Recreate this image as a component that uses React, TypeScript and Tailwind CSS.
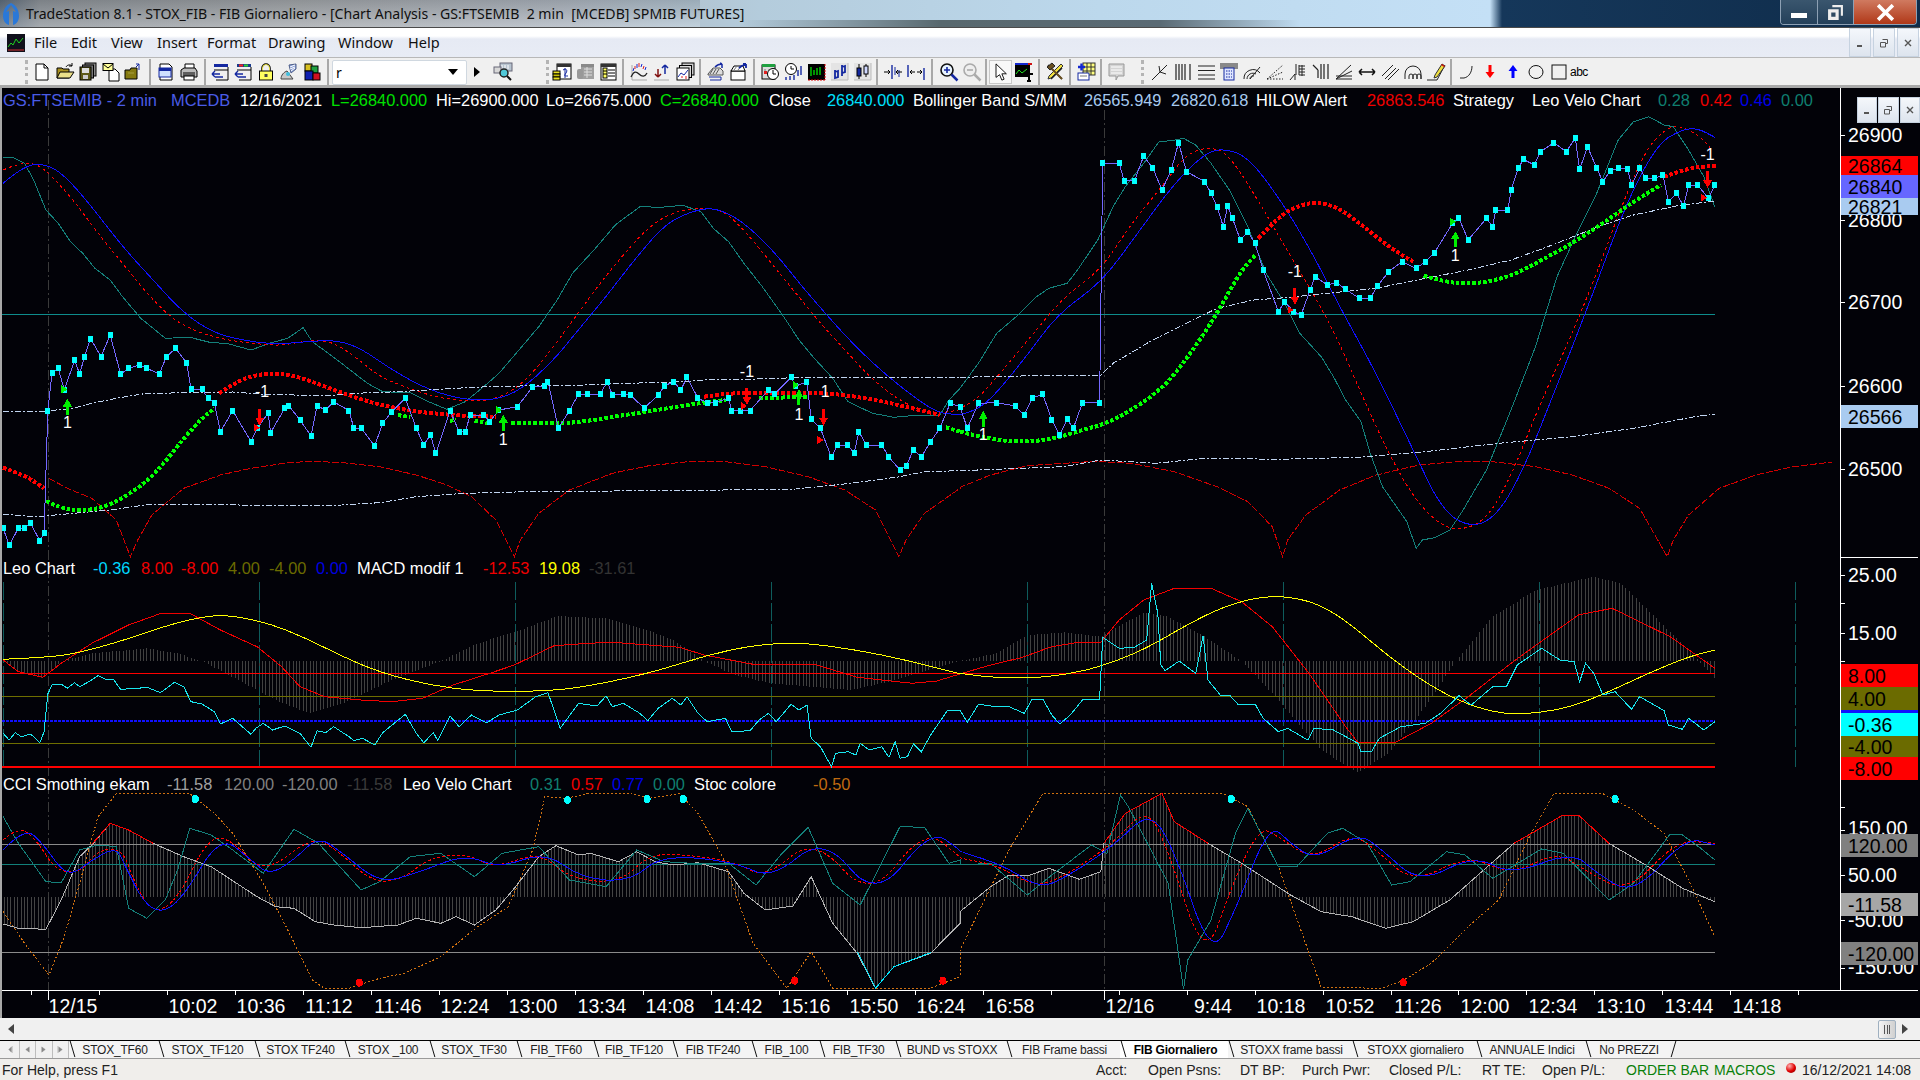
import type { ReactNode } from "react";

// chart data is noted in crop coordinates (x / 1.6333, y / 3), left half and right half
type Pt = [number, number];
const pts = (flat: number[], ox: number, oy: number): Pt[] => {
  const out: Pt[] = [];
  for (let i = 0; i < flat.length; i += 2) out.push([ox + flat[i] / 1.6333, oy + flat[i + 1] / 3]);
  return out;
};
const both = (l: number[], r: number[], oy: number) => [...pts(l, 0, oy), ...pts(r, 960, oy)];
const str = (p: Pt[]) => p.map(([x, y]) => `${x.toFixed(1)},${y.toFixed(1)}`).join(" ");
// rounded version for the moving averages, which have no corners in the chart
const smooth = (p: Pt[]) => {
  let d = `M${p[0][0].toFixed(1)} ${p[0][1].toFixed(1)}`;
  for (let i = 1; i < p.length - 1; i++) {
    const mx = (p[i][0] + p[i + 1][0]) / 2;
    const my = (p[i][1] + p[i + 1][1]) / 2;
    d += `Q${p[i][0].toFixed(1)} ${p[i][1].toFixed(1)} ${mx.toFixed(1)} ${my.toFixed(1)}`;
  }
  const last = p[p.length - 1];
  return `${d}L${last[0].toFixed(1)} ${last[1].toFixed(1)}`;
};
const TOP = 100;
const MID = 550;

const topTeal = both(
  [5,172,20,172,40,190,55,240,75,330,95,370,115,425,135,460,155,505,180,540,200,590,230,655,270,715,310,712,345,728,370,730,410,750,440,730,470,715,495,683,510,725,540,765,565,800,600,850,625,875,670,878,700,905,730,928,760,905,790,860,815,820,850,745,880,680,910,600,935,520,970,450,1005,375,1045,320,1080,322,1115,316,1145,335,1165,385,1190,425,1215,490,1245,560,1280,650,1305,720,1330,775,1360,835,1385,905,1425,940,1460,952,1500,945,1535,945,1550,900,1568,865],
  [0,865,30,790,60,700,95,645,125,590,145,565,175,550,190,515,225,420,250,320,270,260,300,190,325,125,345,122,365,115,385,135,410,190,440,270,470,380,500,520,530,610,555,700,590,770,610,830,630,900,655,965,670,1060,690,1160,730,1265,745,1345,755,1320,775,1313,800,1290,820,1235,860,1110,900,930,940,740,975,530,1005,410,1040,280,1075,120,1100,65,1125,50,1150,75,1165,80,1190,150,1215,230,1233,322],
  TOP,
);
const topRed = both(
  [5,210,30,190,60,190,85,230,120,300,160,400,200,490,240,580,280,655,320,695,370,720,420,732,460,737,500,722,540,722,580,770,620,830,660,860,700,885,740,900,790,905,825,885,860,840,900,750,940,650,980,550,1020,460,1060,380,1100,335,1150,322,1185,335,1220,400,1260,490,1300,580,1340,670,1380,750,1420,830,1460,890,1500,930,1530,940,1568,930],
  [0,925,30,895,70,810,120,700,170,590,230,510,280,370,330,260,370,160,410,140,440,165,490,310,540,470,580,590,620,730,660,900,700,1060,740,1190,780,1270,815,1293,860,1260,900,1130,950,900,1000,700,1040,520,1080,320,1120,150,1150,90,1175,75,1210,110,1228,150],
  TOP,
);
const topBlue = both(
  [5,250,40,195,75,192,105,225,150,320,200,440,250,540,300,640,350,700,400,722,450,733,500,725,550,720,590,745,640,810,700,870,760,900,810,900,850,870,900,790,940,700,990,590,1040,470,1090,365,1140,328,1170,325,1210,360,1260,445,1310,560,1360,665,1400,745,1450,830,1510,915,1540,942,1568,942],
  [0,945,40,920,100,790,160,640,230,550,290,400,350,250,400,160,430,145,470,170,520,290,570,440,620,620,680,820,740,1050,790,1240,840,1285,880,1240,920,1110,970,880,1030,600,1090,300,1140,130,1180,88,1205,85,1233,112],
  TOP,
);
const arcs = both(
  [80,1135,110,1165,150,1195,190,1260,213,1370,225,1320,248,1245,300,1165,360,1125,410,1105,470,1088,510,1084,560,1088,620,1100,680,1125,730,1155,770,1190,810,1260,840,1370,850,1320,880,1240,930,1170,1000,1120,1060,1097,1130,1084,1180,1084,1250,1100,1320,1130,1380,1170,1430,1230,1468,1370,1480,1320,1510,1240,1568,1165],
  [0,1162,50,1125,110,1097,220,1084,280,1090,350,1115,420,1160,470,1205,510,1280,527,1370,535,1320,565,1245,620,1170,680,1125,750,1095,810,1085,870,1085,940,1100,1000,1125,1060,1165,1110,1225,1155,1370,1165,1320,1190,1245,1240,1165,1300,1125,1360,1100,1425,1086],
  TOP,
);
const bandUp = both(
  [5,935,75,933,120,925,150,910,190,895,240,880,320,878,380,876,430,883,480,885,530,888,580,880,650,875,720,868,770,862,850,858,930,857,990,852,1060,848,1120,845,1150,840,1220,838,1300,833,1430,832,1568,833],
  [0,832,100,828,230,826,250,790,310,725,370,670,420,625,480,600,540,592,600,580,680,565,760,535,830,510,900,480,960,440,1050,375,1100,345,1170,318,1233,303],
  TOP,
);
const bandLow = both(
  [5,1243,60,1250,120,1240,180,1230,240,1214,340,1213,440,1217,550,1216,620,1208,680,1190,760,1180,860,1175,960,1175,1060,1170,1180,1170,1300,1167,1390,1150,1470,1130,1510,1115,1568,1112],
  [0,1112,100,1105,170,1100,230,1080,320,1090,400,1075,520,1078,650,1072,760,1055,880,1030,1000,1010,1100,985,1200,950,1233,943],
  TOP,
);
const GREEN = "#00ff00";
const RED = "#ff0000";
const hilow: [Pt[], string][] = [
  [pts([5,1103,40,1125,72,1165], 0, TOP), RED],
  [pts([75,1203,100,1225,130,1232,165,1225,200,1195,240,1145,270,1085,300,1015,330,955,350,925], 0, TOP), GREEN],
  [pts([358,880,390,840,430,820,470,822,510,845,560,880,610,910,650,925,680,935,720,942,760,948,810,950], 0, TOP), RED],
  [pts([650,945,670,952], 0, TOP), GREEN],
  [pts([735,962,745,960], 0, TOP), GREEN],
  [pts([775,962,800,970], 0, TOP), GREEN],
  [pts([835,968,910,972,960,963,1020,945,1080,928,1140,910,1185,900], 0, TOP), GREEN],
  [pts([1240,895,1270,893,1320,890], 0, TOP), GREEN],
  [pts([1150,890,1170,885,1195,880,1240,880,1290,878,1330,878,1380,885,1430,900,1480,920,1535,945], 0, TOP), RED],
  [pts([1545,982,1568,995], 0, TOP), GREEN],
  [pts([0,995,50,1018,100,1026,150,1018,200,990,240,970,280,930,320,880,350,825,380,750,410,670,435,590,460,510,483,465], 960, TOP), GREEN],
  [pts([487,415,520,350,555,315,585,306,620,325,660,380,700,440,740,485], 960, TOP), RED],
  [pts([757,527,790,545,830,552,870,543,910,520,950,480,1000,430,1050,370,1100,305,1145,255], 960, TOP), GREEN],
  [pts([1150,230,1190,203,1235,197], 960, TOP), RED],
];
const price = both(
  [5,1285,15,1335,30,1285,40,1285,50,1270,65,1322,72,1300,78,933,85,820,95,805,105,870,122,780,130,822,138,770,148,716,165,770,180,705,197,822,210,805,228,795,240,805,260,822,272,770,287,745,305,790,312,868,330,868,340,895,350,908,360,995,380,932,410,1025,420,985,438,940,442,998,465,925,472,918,490,960,508,1008,518,918,532,930,545,905,570,932,578,985,590,985,612,1038,625,970,640,935,662,895,680,985,692,1035,703,1005,712,1060,735,932,750,995,760,995,768,945,790,945,800,965,815,930,845,920,870,860,890,858,895,845,912,985,930,932,945,882,960,882,980,882,992,845,1000,885,1018,882,1030,885,1052,925,1075,885,1085,858,1100,845,1112,870,1122,832,1140,895,1155,908,1168,908,1190,895,1195,932,1210,932,1225,932,1255,870,1265,882,1292,832,1300,858,1318,845,1325,958,1340,985,1358,1072,1368,1035,1385,1035,1395,1060,1403,995,1415,1035,1440,1035,1452,1072,1470,1110,1480,1098,1492,1050,1505,1070,1520,1025,1535,985,1552,910,1568,920],
  [0,920,12,985,30,910,60,908,90,918,105,945,118,895,135,882,150,960,163,1005,175,958,185,985,200,908,228,908,233,190,260,190,268,242,285,242,300,168,315,205,330,270,345,210,357,128,370,215,400,245,410,280,420,320,430,380,437,318,445,355,458,420,470,395,482,430,495,510,520,635,530,605,545,635,557,645,572,570,580,530,600,555,615,548,630,568,652,595,670,595,682,558,700,515,722,485,745,505,760,485,775,458,805,368,815,355,830,420,860,355,870,380,875,330,895,330,900,270,912,205,920,178,938,195,948,155,970,128,990,155,1005,115,1012,208,1025,140,1040,205,1050,245,1062,212,1075,205,1090,208,1097,255,1110,205,1120,235,1135,235,1148,225,1157,305,1170,280,1182,318,1190,255,1205,255,1222,295,1233,255],
  TOP,
);

const macdRed = both(
  [5,330,30,365,70,382,100,340,150,280,210,225,260,192,310,190,360,240,420,290,460,350,490,410,530,440,590,450,640,455,690,445,740,405,800,370,840,345,905,287,960,280,1000,277,1110,292,1150,315,1230,343,1330,343,1400,382,1490,400,1530,393,1568,372],
  [0,372,50,345,100,323,150,290,190,278,230,277,260,210,300,150,350,115,410,115,460,155,510,230,570,370,630,530,650,578,710,578,770,520,830,440,900,340,960,260,1010,195,1065,175,1110,215,1160,260,1233,355],
  MID,
);
const macdYellow = both(
  [5,328,80,322,130,308,200,272,280,222,340,197,380,197,440,220,500,265,560,320,620,367,700,405,780,424,900,424,980,402,1070,365,1150,318,1230,285,1310,277,1400,300,1480,330,1568,372],
  [0,370,50,382,110,385,170,375,230,350,300,300,370,225,430,170,490,140,540,140,590,165,640,225,700,320,770,410,830,465,890,493,940,490,1000,470,1060,425,1130,365,1190,320,1233,300],
  MID,
);
const leoCyan = both(
  [5,550,15,570,25,548,35,560,50,552,65,578,72,545,78,432,85,405,100,402,110,415,122,398,130,410,145,395,160,377,175,390,185,388,197,418,225,415,240,412,262,428,285,397,300,410,312,455,330,462,350,485,360,522,380,505,410,553,418,535,430,520,445,540,465,528,490,550,508,592,518,542,532,548,545,530,570,560,578,572,592,565,612,585,625,548,662,493,680,550,692,578,708,548,715,572,735,498,750,530,770,495,795,518,815,495,845,480,875,440,895,428,915,535,945,460,975,468,990,438,1000,470,1018,460,1045,490,1058,512,1075,475,1098,445,1112,465,1122,440,1140,490,1155,515,1185,505,1195,545,1225,542,1240,510,1255,490,1268,515,1292,463,1305,480,1318,465,1325,565,1340,590,1358,650,1365,610,1385,605,1398,615,1405,580,1420,600,1440,590,1452,622,1462,575,1470,625,1482,620,1492,582,1505,605,1520,555,1548,480,1568,480],
  [0,480,12,517,30,463,60,470,80,470,105,490,118,447,135,447,150,495,163,522,180,495,200,450,228,448,233,262,260,295,285,292,305,270,313,100,323,190,328,345,335,362,358,333,385,370,397,258,405,390,425,435,440,435,455,465,482,462,495,505,520,545,535,535,568,570,578,535,610,540,650,580,655,605,672,605,685,565,720,530,760,520,785,490,815,437,835,465,870,410,893,408,910,345,950,295,980,330,1003,335,1012,395,1022,340,1035,370,1050,435,1070,425,1097,478,1110,440,1150,482,1157,525,1180,538,1190,505,1215,540,1233,515],
  MID,
);
const macdHist = both(
  [5,333,30,365,70,385,100,333,150,310,240,295,290,310,330,333,400,400,450,450,505,490,560,460,640,390,720,333,780,280,850,240,910,198,990,205,1050,235,1100,270,1150,333,1200,375,1260,400,1390,420,1440,400,1500,370,1568,333],
  [0,333,60,310,110,255,170,247,230,260,300,187,340,200,400,260,460,333,520,450,590,600,650,668,700,610,760,470,810,333,870,200,940,120,1035,80,1080,100,1140,210,1190,300,1233,385],
  MID,
);

const cciLine = both(
  [5,1122,30,1135,75,1138,100,1050,130,920,150,885,180,820,210,840,250,880,300,920,345,950,420,1040,450,1070,480,1075,515,1115,545,1125,590,1133,650,1125,680,1105,720,1120,745,1100,775,1125,810,1080,840,1015,880,920,908,887,945,915,965,910,1010,935,1040,905,1070,935,1100,945,1140,938,1190,965,1215,1030,1250,1080,1295,1068,1325,980,1360,1120,1400,1210,1430,1315,1460,1250,1520,1210,1568,1120],
  [0,1085,50,1010,80,975,110,978,145,955,195,988,230,965,235,880,270,790,330,730,350,815,405,880,460,940,540,1035,590,1085,640,1100,695,1135,740,1115,800,1050,840,985,905,880,985,795,1010,795,1060,880,1120,945,1180,1015,1233,1055],
  MID,
);
const cciTeal = both(
  [5,800,30,880,75,995,100,998,130,900,160,885,190,890,210,1075,240,1105,270,1050,290,960,310,835,345,855,380,900,430,970,480,838,520,880,590,1020,620,995,670,920,720,910,775,980,820,910,880,890,930,990,990,1010,1040,900,1085,935,1130,940,1190,940,1235,1005,1275,915,1320,832,1360,1000,1405,1065,1470,830,1510,832,1550,940,1568,930],
  [0,945,50,940,110,1035,150,975,215,885,240,910,262,735,275,770,340,1000,365,1318,372,1230,410,1110,450,850,470,775,520,950,550,950,600,850,625,835,665,880,705,1005,735,995,795,905,825,915,870,985,950,897,985,910,1060,1050,1100,1000,1160,852,1180,855,1210,895,1233,930],
  MID,
);
const cciRed = both(
  [5,870,30,828,60,870,90,960,130,970,160,900,200,895,220,1000,250,1092,290,1050,340,860,380,870,430,975,510,858,550,900,610,1000,660,985,700,925,760,910,810,955,880,905,930,985,1010,1000,1060,915,1110,912,1200,935,1250,985,1330,860,1420,1050,1510,835,1568,920],
  [0,925,60,945,120,1010,170,980,250,880,305,770,340,900,400,1240,445,1000,490,830,520,860,575,930,640,850,680,900,740,1000,830,915,900,975,975,905,1020,960,1090,1030,1170,870,1233,880],
  MID,
);
const cciBlue = both(
  [5,900,40,832,70,880,110,985,150,930,190,890,205,950,235,1060,265,1090,300,1040,360,855,410,930,440,975,480,930,520,858,560,910,620,1000,680,970,760,912,815,955,890,905,950,985,1030,995,1080,915,1200,935,1260,988,1345,857,1430,1050,1520,838,1568,900],
  [0,905,70,945,130,1015,170,985,250,890,310,780,350,900,410,1225,450,1080,505,820,540,880,580,930,650,848,690,900,750,1000,840,915,900,975,1000,905,1040,970,1100,1035,1185,862,1233,885],
  MID,
);
const stocOrange = both(
  [5,1085,40,1180,80,1275,105,1160,130,1000,160,800,190,731,310,731,350,790,380,850,430,1000,470,1140,510,1290,530,1315,570,1315,620,1285,660,1270,720,1220,780,1130,830,1070,870,900,890,740,925,745,960,731,1030,731,1060,745,1110,731,1140,790,1180,920,1230,1180,1285,1315,1325,1205,1360,1315,1520,1315,1568,1280],
  [0,1200,40,1050,80,900,135,731,430,731,470,770,520,950,590,1312,690,1315,725,1290,770,1240,830,1130,880,1050,930,860,970,731,1050,731,1100,780,1150,850,1190,990,1233,1160],
  MID,
);
const cciHot: [Pt[], string][] = [
  [pts([150,883,180,820,210,840,250,880], 0, MID), "#ff0000"],
  [pts([1400,1205,1430,1315,1460,1250,1520,1208], 0, MID), "#00e8ff"],
  [pts([235,880,270,790,330,730,350,815,405,880], 960, MID), "#ff0000"],
  [pts([905,880,985,795,1010,795,1060,880], 960, MID), "#ff0000"],
];

// grey histogram bars are read off the envelope at a fixed step
const at = (line: Pt[], x: number) => {
  for (let i = 1; i < line.length; i++) {
    if (x <= line[i][0]) {
      const [x0, y0] = line[i - 1];
      const [x1, y1] = line[i];
      return y0 + ((y1 - y0) * (x - x0)) / Math.max(x1 - x0, 0.01);
    }
  }
  return line[line.length - 1][1];
};
const bars = (env: Pt[], base: number) => {
  let d = "";
  for (let x = 4; x <= 1715; x += 3.4) d += `M${x.toFixed(1)} ${base}V${at(env, x).toFixed(1)}`;
  return d;
};

const crop = (x: number, ox = 0) => ox + x / 1.6333;
const ups: Pt[] = [[crop(110), 100 + 920 / 3], [crop(822), 100 + 968 / 3], [crop(1305), 100 + 892 / 3], [crop(38, 960), 100 + 957 / 3], [crop(809, 960), 100 + 418 / 3]];
const downs: Pt[] = [[crop(424), 100 + 950 / 3], [crop(1220), 100 + 888 / 3], [crop(1345), 100 + 950 / 3], [crop(547, 960), 100 + 587 / 3], [crop(1221, 960), 100 + 237 / 3]];
const counts: [string, number, number][] = [
  ["1", crop(110), 100 + 985 / 3],
  ["-1", crop(428), 100 + 892 / 3],
  ["1", crop(822), 100 + 1035 / 3],
  ["-1", crop(1220), 100 + 832 / 3],
  ["1", crop(1305), 100 + 960 / 3],
  ["1", crop(1348), 100 + 892 / 3],
  ["1", crop(38, 960), 100 + 1020 / 3],
  ["-1", crop(547, 960), 100 + 532 / 3],
  ["1", crop(809, 960), 100 + 483 / 3],
  ["-1", crop(1221, 960), 100 + 180 / 3],
];
const flagsGreen: Pt[] = [[crop(105), 100 + 868 / 3], [crop(815), 100 + 930 / 3], [crop(1300), 100 + 855 / 3], [crop(805, 960), 100 + 365 / 3]];
const flagsRed: Pt[] = [[crop(420), 100 + 983 / 3], [crop(1215), 100 + 918 / 3], [crop(1340), 100 + 1020 / 3], [crop(540, 960), 100 + 630 / 3], [crop(1215, 960), 100 + 293 / 3]];
const dotsCyan: Pt[] = [[crop(319), 550 + 747 / 3], [crop(927), 550 + 750 / 3], [crop(1057), 550 + 747 / 3], [crop(1116), 550 + 747 / 3], [crop(443, 960), 550 + 747 / 3], [crop(1070, 960), 550 + 747 / 3]];
const dotsRed: Pt[] = [[crop(587), 550 + 1298 / 3], [crop(1298), 550 + 1292 / 3], [crop(1540), 550 + 1292 / 3], [crop(724, 960), 550 + 1297 / 3]];

const timeLabels: [string, number][] = [
  ["12/15", 73], ["10:02", 193], ["10:36", 261], ["11:12", 329], ["11:46", 398], ["12:24", 465], ["13:00", 533], ["13:34", 602],
  ["14:08", 670], ["14:42", 738], ["15:16", 806], ["15:50", 874], ["16:24", 941], ["16:58", 1010], ["12/16", 1130], ["9:44", 1213],
  ["10:18", 1281], ["10:52", 1350], ["11:26", 1418], ["12:00", 1485], ["12:34", 1553], ["13:10", 1621], ["13:44", 1689], ["14:18", 1757],
];
const timeTicks = [
  ...[52,162,273,385,496,607,718,829,940,1051,1162,1273,1384,1495].map((x) => crop(x)),
  ...[38,149,260,371,482,593,704,815,926,1037,1148,1259,1370].map((x) => crop(x, 960)),
];
const macdMarks = [...[5,424,842,1260].map((x) => crop(x)), ...[110,528,946,1364].map((x) => crop(x, 960))];

function PlotArea() {
  return (
    <svg viewBox="2 88 1838 930" className="h-full w-[1838px] shrink-0 font-['Liberation_Sans',sans-serif]" shapeRendering="crispEdges">
      <line x1="48" y1="100" x2="48" y2="990" stroke="#3a3a3a" strokeDasharray="10 3 2 3" />
      <line x1="1104" y1="110" x2="1104" y2="990" stroke="#3a3a3a" strokeDasharray="10 3 2 3" />
      {/* price panel */}
      <line x1="2" y1="314.5" x2="1715" y2="314.5" stroke="#0e8c8c" />
      <polyline points={str(arcs)} fill="none" stroke="#d00000" strokeDasharray="7 2" />
      <polyline points={str(topTeal)} fill="none" stroke="#14807a" />
      <path d={smooth(topRed)} fill="none" stroke="#ff0000" strokeDasharray="3 3" />
      <path d={smooth(topBlue)} fill="none" stroke="#1010ff" />
      <polyline points={str(bandUp)} fill="none" stroke="#c0d4f0" strokeDasharray="6 2 2 2" />
      <polyline points={str(bandLow)} fill="none" stroke="#c0d4f0" strokeDasharray="6 2 2 2" />
      {hilow.map(([p, c], i) => (
        <path key={i} d={smooth(p)} fill="none" stroke={c} strokeWidth="4" strokeDasharray="3.5 2" />
      ))}
      <polyline points={str(price)} fill="none" stroke="#7468ff" />
      {price.map(([x, y], i) => (
        <rect key={i} x={x - 2.5} y={y - 3} width="5" height="6" fill="#00ffff" />
      ))}
      {flagsGreen.map(([x, y], i) => (
        <path key={i} d={`M${x - 3} ${y - 4}l6 4l-6 4z`} fill="#00f000" />
      ))}
      {flagsRed.map(([x, y], i) => (
        <path key={i} d={`M${x - 3} ${y - 4}l6 4l-6 4z`} fill="#ff0000" />
      ))}
      {ups.map(([x, y], i) => (
        <path key={i} d={`M${x} ${y - 8}l4.5 8h-3v8h-3v-8h-3z`} fill="#00f000" />
      ))}
      {downs.map(([x, y], i) => (
        <path key={i} d={`M${x - 1.5} ${y - 8}h3v9h3l-4.5 8l-4.5-8h3z`} fill="#ff0000" />
      ))}
      {counts.map(([t, x, y], i) => (
        <text key={i} x={x} y={y} fill="#fff" fontSize="16" textAnchor="middle">{t}</text>
      ))}

      {/* macd panel */}
      <path d={bars(macdHist, 661)} stroke="#404040" fill="none" />
      {macdMarks.map((x) => (
        <line key={x} x1={x} y1="582" x2={x} y2="767" stroke="#0e5c5c" strokeDasharray="18 3" />
      ))}
      <line x1="2" y1="673.5" x2="1715" y2="673.5" stroke="#ff0000" />
      <line x1="2" y1="696.5" x2="1715" y2="696.5" stroke="#6e6e00" />
      <line x1="2" y1="721" x2="1715" y2="721" stroke="#1010ff" strokeWidth="2" strokeDasharray="3 1" />
      <line x1="2" y1="743.5" x2="1715" y2="743.5" stroke="#6e6e00" />
      <line x1="2" y1="767" x2="1715" y2="767" stroke="#ff0000" strokeWidth="2" />
      <polyline points={str(macdRed)} fill="none" stroke="#f00000" />
      <path d={smooth(macdYellow)} fill="none" stroke="#ffff00" />
      <polyline points={str(leoCyan)} fill="none" stroke="#19e6ee" />

      {/* cci panel */}
      <path d={bars(cciLine, 897)} stroke="#444444" fill="none" />
      <line x1="2" y1="844" x2="1715" y2="844" stroke="#8a8a8a" />
      <line x1="2" y1="864" x2="1715" y2="864" stroke="#12807a" />
      <line x1="2" y1="952" x2="1715" y2="952" stroke="#8a8a8a" />
      <polyline points={str(stocOrange)} fill="none" stroke="#d07010" strokeDasharray="2 2" />
      <polyline points={str(cciLine)} fill="none" stroke="#b4b4b4" />
      {cciHot.map(([p, c], i) => (
        <polyline key={i} points={str(p)} fill="none" stroke={c} />
      ))}
      <polyline points={str(cciTeal)} fill="none" stroke="#14807a" />
      <path d={smooth(cciRed)} fill="none" stroke="#ff0000" strokeDasharray="3 2" />
      <path d={smooth(cciBlue)} fill="none" stroke="#1010ff" />
      {dotsCyan.map(([x, y], i) => (
        <ellipse key={i} cx={x} cy={y} rx="3.5" ry="4" fill="#00ffff" />
      ))}
      {dotsRed.map(([x, y], i) => (
        <ellipse key={i} cx={x} cy={y} rx="3.5" ry="4" fill="#ff0000" />
      ))}

      {/* time axis */}
      <line x1="2" y1="990" x2="1840" y2="990" stroke="#fff" />
      {timeTicks.map((x) => (
        <line key={x} x1={x} y1="990" x2={x} y2="995" stroke="#fff" />
      ))}
      <line x1="48" y1="990" x2="48" y2="1000" stroke="#fff" />
      <line x1="1104" y1="990" x2="1104" y2="1000" stroke="#fff" />
      {timeLabels.map(([t, x]) => (
        <text key={t} x={x} y="1013" fill="#fff" fontSize="19.5" textAnchor="middle">{t}</text>
      ))}
    </svg>
  );
}

const scaleLabels: [string, number][] = [
  ["26900", 135], ["26800", 220], ["26700", 302], ["26600", 386], ["26500", 469],
  ["25.00", 575], ["15.00", 633], ["150.00", 828], ["50.00", 875], ["-50.00", 920], ["-150.00", 967],
];
const scaleTicks = [135, 220, 302, 386, 469, 575, 603, 633, 661, 807, 830, 875, 920, 968];
const scaleBoxes: [string, number, number, string][] = [
  ["26821", 198, 215, "#a9cbf0"],
  ["26864", 156, 175, "#ff0000"],
  ["26840", 175, 198, "#6666ff"],
  ["26566", 405, 428, "#a9cbf0"],
  ["8.00", 664, 687, "#ff0000"],
  ["4.00", 687, 710, "#6b6b00"],
  ["-0.36", 713, 736, "#00ffff"],
  ["-4.00", 736, 757, "#6b6b00"],
  ["-8.00", 757, 780, "#ff0000"],
  ["120.00", 834, 857, "#808080"],
  ["-11.58", 893, 916, "#a6a6a6"],
  ["-120.00", 942, 965, "#808080"],
];

function PriceScale() {
  return (
    <svg viewBox="1840 88 80 930" className="h-full w-[80px] shrink-0 font-['Liberation_Sans',sans-serif]" shapeRendering="crispEdges">
      <line x1="1840.5" y1="88" x2="1840.5" y2="990" stroke="#fff" />
      <line x1="1840" y1="557" x2="1918" y2="557" stroke="#fff" />
      <line x1="1840" y1="990" x2="1918" y2="990" stroke="#fff" />
      {scaleTicks.map((y) => (
        <line key={y} x1="1840" y1={y} x2="1845" y2={y} stroke="#fff" />
      ))}
      {scaleLabels.map(([t, y]) => (
        <text key={t} x="1848" y={y + 7} fill="#fff" fontSize="19.5">{t}</text>
      ))}
      <rect x="1841" y="710" width="77" height="3" fill="#1010ff" />
      {scaleBoxes.map(([t, y0, y1, c]) => (
        <g key={t}>
          <rect x="1841" y={y0} width="77" height={y1 - y0} fill={c} />
          <text x="1848" y={(y0 + y1) / 2 + 7} fill="#000" fontSize="19.5">{t}</text>
        </g>
      ))}
    </svg>
  );
}

const row1: [string, string][] = [
  ["GS:FTSEMIB - 2 min", "w-[168px] text-[#4a5ce6]"],
  ["MCEDB", "w-[69px] text-[#4a5ce6]"],
  ["12/16/2021", "w-[91px] text-white"],
  ["L=26840.000", "w-[105px] text-[#00e000]"],
  ["Hi=26900.000", "w-[110px] text-white"],
  ["Lo=26675.000", "w-[114px] text-white"],
  ["C=26840.000", "w-[109px] text-[#00e000]"],
  ["Close", "w-[58px] text-white"],
  ["26840.000", "w-[86px] text-[#00e0ff]"],
  ["Bollinger Band S/MM", "w-[171px] text-white"],
  ["26565.949", "w-[87px] text-[#a6caf0]"],
  ["26820.618", "w-[85px] text-[#a6caf0]"],
  ["HILOW Alert", "w-[111px] text-white"],
  ["26863.546", "w-[86px] text-[#f00000]"],
  ["Strategy", "w-[79px] text-white"],
  ["Leo Velo Chart", "w-[126px] text-white"],
  ["0.28", "w-[42px] text-[#0f7f70]"],
  ["0.42", "w-[40px] text-[#f00000]"],
  ["0.46", "w-[41px] text-[#0000e8]"],
  ["0.00", "w-[40px] text-[#0f7f70]"],
];
const row2: [string, string][] = [
  ["Leo Chart", "w-[90px] text-white"],
  ["-0.36", "w-[48px] text-[#00d8ff]"],
  ["8.00", "w-[40px] text-[#f00000]"],
  ["-8.00", "w-[47px] text-[#f00000]"],
  ["4.00", "w-[41px] text-[#6b6b00]"],
  ["-4.00", "w-[47px] text-[#6b6b00]"],
  ["0.00", "w-[41px] text-[#0000e0]"],
  ["MACD modif 1", "w-[126px] text-white"],
  ["-12.53", "w-[56px] text-[#f00000]"],
  ["19.08", "w-[50px] text-[#ffff00]"],
  ["-31.61", "w-[60px] text-[#333333]"],
];
const row3: [string, string][] = [
  ["CCI Smothing ekam", "w-[164px] text-white"],
  ["-11.58", "w-[57px] text-[#a0a0a0]"],
  ["120.00", "w-[58px] text-[#808080]"],
  ["-120.00", "w-[65px] text-[#808080]"],
  ["-11.58", "w-[56px] text-[#3a3a3a]"],
  ["Leo Velo Chart", "w-[127px] text-white"],
  ["0.31", "w-[41px] text-[#0f7f70]"],
  ["0.57", "w-[41px] text-[#f00000]"],
  ["0.77", "w-[41px] text-[#0000e8]"],
  ["0.00", "w-[41px] text-[#0f7f70]"],
  ["Stoc colore", "w-[119px] text-white"],
  ["-0.50", "w-[50px] text-[#c06a10]"],
];

function Legend({ items, className }: { items: [string, string][]; className: string }) {
  return (
    <div className={`pointer-events-none absolute left-[1px] flex h-5 items-center text-[16.4px] leading-5 whitespace-nowrap ${className}`}>
      {items.map(([t, c], i) => (
        <span key={i} className={`shrink-0 ${c}`}>{t}</span>
      ))}
    </div>
  );
}

function Ico({ children }: { children: ReactNode }) {
  return (
    <svg viewBox="0 0 20 20" className="size-5" fill="none">
      {children}
    </svg>
  );
}
function Btn({ children }: { children: ReactNode }) {
  return <div className="flex h-[24px] w-[23px] shrink-0 items-center justify-center">{children}</div>;
}
function Sep({ className }: { className: string }) {
  return <div className={`flex h-[26px] shrink-0 justify-center ${className}`}><div className="w-[2px] bg-[#a8a8a8]" /></div>;
}
function Grip({ className }: { className: string }) {
  return <div className={`h-[24px] w-[3px] shrink-0 border-l-[3px] border-dotted border-[#b4b4b4] ${className}`} />;
}

const strokeK = { stroke: "#000", strokeWidth: 1 };
const group1 = [
  <><path d="M4 2h8l4 4v12H4z" fill="#fff" {...strokeK} /><path d="M12 2v4h4" {...strokeK} /></>,
  <><path d="M2 6h5l1 1h6v9H2z" fill="#a89020" {...strokeK} /><path d="M2 16l3-6h14l-4 6z" fill="#eadf8a" {...strokeK} /><path d="M11 5c1-2 4-3 6-1m0 0v-3m0 3h-3" stroke="#000" /></>,
  <><rect x="7" y="1" width="11" height="13" fill="#888" {...strokeK} /><rect x="4.5" y="3" width="11" height="13" fill="#777" {...strokeK} /><rect x="2" y="5" width="11" height="13" fill="#5e5a18" {...strokeK} /><rect x="4" y="6" width="7" height="5" fill="#ddd" /><rect x="5" y="13" width="5" height="4" fill="#ccc" /></>,
  <><path d="M8 7h6l4 4v8H8z" fill="#fff" {...strokeK} /><rect x="2" y="1.5" width="10" height="7" fill="#ffff99" {...strokeK} /><path d="M2 2l5 4l5-4" {...strokeK} /></>,
  <><path d="M1 8h5l1-2h6v11H1z" fill="#857a10" {...strokeK} /><path d="M15 8V2m0 0h-3m3 0l-3 3" stroke="#1428a0" /><path d="M4 11h6" stroke="#a8a040" /></>,
];
const group2 = [
  <><path d="M4 2h9l3 3v13H4z" fill="#fff" {...strokeK} /><rect x="3" y="6" width="12" height="9" fill="#cfe0ff" stroke="#1428a0" /><rect x="3" y="6" width="12" height="3" fill="#1428a0" /></>,
  <><path d="M6 2h9v5H6z" fill="#fff" {...strokeK} /><path d="M2 8l3-2h11l2 3v6H2z" fill="#bbb" {...strokeK} /><path d="M4 11h12M4 13h12" stroke="#000" /><rect x="5" y="14" width="10" height="4" fill="#fff" {...strokeK} /></>,
];
const group3 = [
  <><rect x="4" y="2" width="14" height="3" fill="#1428a0" /><path d="M4 8h14M18 5v13H6" stroke="#000" /><path d="M2 12h8m-8 0l3-3m-3 3l3 3M5 15h8" stroke="#1428a0" strokeWidth="1.4" /></>,
  <><rect x="4" y="2" width="14" height="3" fill="#1a3a8a" /><rect x="6" y="2.5" width="4" height="2" fill="#ff2020" /><rect x="11" y="2.5" width="4" height="2" fill="#30d030" /><path d="M4 8h14M18 5v13H6" stroke="#000" /><path d="M2 12h8m-8 0l3-3m-3 3l3 3M5 15h8" stroke="#1428a0" strokeWidth="1.4" /></>,
  <><path d="M6 9V6a4 4 0 0 1 8 0v3" stroke="#000" strokeWidth="1.5" /><path d="M6.5 9V6a3.5 3.5 0 0 1 7 0v3" stroke="#e8e040" /><rect x="3.5" y="9" width="13" height="9" fill="#ffff60" {...strokeK} /><rect x="8.5" y="12" width="3" height="3" fill="#444" /></>,
  <><path d="M10 3l7-1v5l-5 4z" fill="#8aa0d8" stroke="#50608a" /><path d="M11 5l5-2M11 7l5-2M12 9l4-3" stroke="#fff" /><path d="M2 17c0-4 3-7 6-8l6 8z" fill="#c8c8c8" stroke="#444" /><circle cx="9" cy="12" r="2" fill="#40c0e0" /></>,
  <><rect x="3" y="2" width="7" height="7" fill="#d8c020" {...strokeK} /><rect x="9" y="4" width="7" height="7" fill="#20a040" {...strokeK} /><rect x="3" y="9" width="8" height="9" fill="#1020b0" {...strokeK} /><rect x="11" y="11" width="7" height="7" fill="#d01020" {...strokeK} /></>,
];
const zoomChart = <><rect x="7" y="1" width="12" height="8" fill="#b8c4d0" stroke="#667" /><path d="M9 3v4M12 3v4M15 3v4" stroke="#fff" /><rect x="1" y="5" width="7" height="6" fill="#d8d8d8" stroke="#667" /><circle cx="11" cy="11" r="4" fill="#50c8d8" stroke="#222" strokeWidth="1.5" /><path d="M14 14l4 4" stroke="#111" strokeWidth="2" /></>;
const group4 = [
  <><rect x="5" y="2" width="14" height="15" fill="#fff" {...strokeK} /><rect x="5" y="2" width="14" height="3" fill="#333" /><path d="M13 6v10M11 8c3-2 5 0 3 3s-2 3 2 3" stroke="#1428a0" /><rect x="1" y="9" width="7" height="3" fill="#e8e020" {...strokeK} /><rect x="1" y="12" width="7" height="3" fill="#c8c000" {...strokeK} /><rect x="1" y="15" width="7" height="3" fill="#e8e020" {...strokeK} /></>,
  <><rect x="6" y="2" width="13" height="15" fill="#a0a0a0" /><rect x="6" y="2" width="13" height="3" fill="#8a8a8a" /><path d="M9 7h8M9 10h8M9 13h8M12 5v11" stroke="#ddd" /><rect x="2" y="7" width="6" height="10" rx="2" fill="#999" /></>,
  <><rect x="3" y="2" width="15" height="16" fill="#fff" {...strokeK} /><rect x="3" y="2" width="15" height="3" fill="#333" /><rect x="5" y="6" width="4" height="10" fill="#ffff60" {...strokeK} /><path d="M5 9h4M5 12h4M10 8h7M10 11h7M10 14h7" stroke="#000" /></>,
];
const group5 = [
  <><path d="M3 3v15h15" stroke="#aaa" /><path d="M2 15c3-6 5-6 8-3s6 3 8-1" stroke="#222" strokeWidth="1.3" /><path d="M4 9l1-3M8 6l0-4M12 5l1-3M16 8l1-3" stroke="#1428d0" /><path d="M6 7l0-3M10 5v-4M14 7l1-3" stroke="#e02020" /></>,
  <><path d="M2 18h15" stroke="#aaa" /><path d="M6 7v8m0 0l-3-3m3 3l3-3" stroke="#801010" strokeWidth="1.5" /><path d="M13 12V3m0 0l-3 3m3-3l3 3" stroke="#1428a0" strokeWidth="1.5" /></>,
  <><rect x="7" y="1" width="12" height="12" fill="#ccc" {...strokeK} /><rect x="4.5" y="3.5" width="12" height="12" fill="#ddd" {...strokeK} /><rect x="2" y="6" width="12" height="12" fill="#fff" {...strokeK} /><path d="M3 15l3-4l3 2l4-5" stroke="#1428a0" /><path d="M6 15h2M11 14v3" stroke="#e02020" /></>,
];
const group6 = [
  <><path d="M2 12l5-6h7l3 3v4H2z" fill="#ddd" stroke="#555" /><path d="M4 12l3-5M7 12l3-5M10 12l3-5" stroke="#555" /><path d="M9 5c2-2 4-3 7-3m0 0l-2-1m2 1v4" stroke="#1428a0" strokeWidth="1.5" /><path d="M3 15h12v3H4" stroke="#1428a0" /></>,
  <><rect x="2" y="9" width="14" height="9" fill="#fff" {...strokeK} /><path d="M2 9l3-5h9l2 5z" fill="#fff" {...strokeK} /><path d="M5 8l3-4M9 8l3-4" stroke="#777" /><path d="M10 6c2-2 4-3 7-4m0 0l-3 0m3 0v4" stroke="#1428a0" strokeWidth="1.8" /></>,
];
const group7 = [
  <><rect x="2" y="3" width="13" height="14" fill="#ddd" {...strokeK} /><rect x="2" y="2" width="13" height="3" fill="#20a040" /><path d="M4 8h2M8 8h2M4 11h2M8 11h2" stroke="#777" /><rect x="4" y="9" width="3" height="3" fill="#e02020" /><circle cx="13" cy="12" r="5.5" fill="#fff" {...strokeK} /><path d="M13 8v4h3" {...strokeK} /></>,
  <><circle cx="8" cy="7" r="5.5" fill="#fff" {...strokeK} /><path d="M8 4v3h3" {...strokeK} /><path d="M3 15v3M7 14v4M11 13v5M15 8v6M18 4v9" stroke="#1428a0" strokeWidth="1.4" /></>,
  <><rect x="2" y="2" width="17" height="16" fill="#000" /><path d="M5 5v9M8 8v5M11 6v7M14 5v8" stroke="#00e000" strokeWidth="1.3" /><path d="M2 18h17M19 2v16" stroke="#e00000" strokeDasharray="2 1" /></>,
  <><rect x="2" y="1" width="17" height="17" fill="#e4e4e4" /><path d="M2 18h17M19 1v17" stroke="#bbb" /><path d="M6 8v9M6 10l3-1v6l-3 1z" stroke="#1428a0" strokeWidth="1.8" /><path d="M13 3v11M13 5l3-1v6l-3 1z" stroke="#1428a0" strokeWidth="1.8" /></>,
  <><rect x="2" y="1" width="17" height="17" fill="#e4e4e4" /><path d="M2 18h17M19 1v17" stroke="#bbb" /><path d="M7 2v15M14 2v13" stroke="#000" /><rect x="5" y="6" width="4" height="8" fill="#1428a0" stroke="#000" /><rect x="12" y="4" width="4" height="8" fill="#d0d8ff" stroke="#000" /></>,
];
const group8 = [
  <><path d="M9 3v14" stroke="#1428a0" strokeWidth="1.4" /><path d="M12 5v8M16 8v7" stroke="#1428a0" /><path d="M1 10h6m0 0l-2-2m2 2l-2 2M19 10h-6m0 0l2-2m-2 2l2 2" stroke="#000" /></>,
  <><path d="M2 3v12M18 6v12" stroke="#1428a0" strokeWidth="1.4" /><path d="M4 10h5M4 10l2-2M4 10l2 2M16 10h-5M16 10l-2-2M16 10l-2 2" stroke="#000" /></>,
];
const group9 = [
  <><circle cx="8" cy="8" r="6" fill="#e8f4ff" stroke="#111" strokeWidth="1.6" /><path d="M5 8h6M8 5v6" stroke="#1428a0" strokeWidth="1.6" /><path d="M12.5 12.5l6 6" stroke="#1428a0" strokeWidth="2.5" /></>,
  <><circle cx="8" cy="8" r="6" fill="#eee" stroke="#aaa" strokeWidth="1.6" /><path d="M5 8h6" stroke="#aaa" strokeWidth="1.6" /><path d="M12.5 12.5l6 6" stroke="#aaa" strokeWidth="2.5" /></>,
];
const tChart = <><rect x="1" y="2" width="15" height="13" fill="#000" /><rect x="1" y="1" width="15" height="2" fill="#1428d0" /><rect x="14" y="1" width="4" height="2" fill="#d01010" /><path d="M2 12l3-4l3 3l5-4" stroke="#20e020" /><path d="M11 12h8M15 12v7M13 19h4" stroke="#000" strokeWidth="2" /></>;
const tools = <><path d="M3 3l14 14M17 6l-11 11" stroke="#222" strokeWidth="1.5" /><path d="M16 2l2 2L6 16l-3 1 1-3z" fill="#f0e040" stroke="#333" /><path d="M2 5l5-4 3 3-5 4z" fill="#6a5020" stroke="#222" /><path d="M7 7l10 10" stroke="#6a5020" strokeWidth="2" /></>;
const addSheet = <><rect x="7" y="1" width="12" height="12" fill="#ffff80" stroke="#333" /><path d="M7 5h12M7 9h12M11 1v12M15 1v12" stroke="#333" /><path d="M2 5h7M5.5 1.5v7" stroke="#1428d0" strokeWidth="2.4" /><rect x="2" y="11" width="11" height="7" fill="#fff" stroke="#1428a0" /><path d="M4 14h7" stroke="#777" /></>;
const noteGrey = <><path d="M2 2h15v12h-6l-2 4v-4H2z" fill="#d4d4d4" stroke="#999" /><path d="M4 5h11M4 8h11M4 11h11" stroke="#fff" /></>;
const drawTools = [
  <><path d="M2 18l8-8M10 10l7-7M10 10l6 2M10 10l-1-6" stroke="#222" /></>,
  <><path d="M3 2v16M6 2v16M9 2v16M12 2v16M17 2v16" stroke="#222" strokeWidth="1.2" /></>,
  <><path d="M2 4h17M2 8.5h17M2 13h17M2 17h17" stroke="#222" strokeWidth="1.2" /></>,
  <><path d="M1 2h18M1 4h18M1 6h18" stroke="#222" /><rect x="5" y="6" width="10" height="12" fill="#dfe6ff" stroke="#1428a0" /><path d="M7 9h6M7 12h6M7 15h6" stroke="#1428a0" strokeDasharray="1.5 1" /></>,
  <><path d="M2 17a9 9 0 0 1 16-6M5 17a6 6 0 0 1 9-5M8 17a3 3 0 0 1 4-3M8 17L18 5" stroke="#222" /></>,
  <><path d="M2 17L18 3M2 17l16-7M2 17h16" stroke="#222" strokeDasharray="1.5 1.5" /></>,
  <><path d="M2 18l5-6v6M8 13V2M11 13V3M14 14V3M17 4H11M17 7H11M17 10H11M17 13H11" stroke="#222" /></>,
  <><path d="M2 3l5 5M10 2v15M13 2v15M17 2v15M7 8v8" stroke="#222" strokeWidth="1.2" /></>,
  <><path d="M2 17L17 3M2 17l16-8M2 17h16M2 14h16" stroke="#222" /></>,
  <><path d="M2 10h16M2 10l3-3M2 10l3 3M18 10l-3-3M18 10l-3 3" stroke="#111" strokeWidth="1.5" /></>,
  <><path d="M2 14L13 3M5 17L16 6M8 18L19 7" stroke="#222" /></>,
  <><path d="M2 17v-5a8 8 0 0 1 16 0v5M6 17v-3a2 2 0 0 1 4 0v3M10 17v-3a2 2 0 0 1 4 0v3M14 17v-3a2 2 0 0 1 4 0v3" stroke="#222" /></>,
  <><path d="M1 18h10l8-15" stroke="#222" /><path d="M16 2l3 2-8 11-3 1 1-3z" fill="#f0e040" stroke="#333" /><path d="M16 2l3 2-1 1-3-2z" fill="#d01010" /></>,
];
const shapes = [
  <><path d="M3 16h4c5-1 8-6 8-12" stroke="#222" /></>,
  <><path d="M8.5 3h3v7h3l-4.5 6-4.5-6h3z" fill="#ff0000" /></>,
  <><path d="M10 3l4.5 6h-3v7h-3v-7h-3z" fill="#0000ff" /></>,
  <><ellipse cx="10" cy="10" rx="7" ry="6.5" stroke="#111" /></>,
  <><rect x="3" y="3" width="14" height="14" stroke="#111" /></>,
];

function Toolbar() {
  return (
    <div className="flex h-[30px] shrink-0 items-center border-b-[3px] border-[#a9a9a9] bg-[#f0f0f0] pt-[1px] pl-[25px]">
      <Grip className="mr-[2.5px]" />
      {group1.map((g, i) => <Btn key={i}><Ico>{g}</Ico></Btn>)}
      <Sep className="w-[9px]" />
      {group2.map((g, i) => <Btn key={i}><Ico>{g}</Ico></Btn>)}
      <Sep className="w-[8px]" />
      {group3.map((g, i) => <Btn key={i}><Ico>{g}</Ico></Btn>)}
      <Sep className="w-[8.5px]" />
      <div className="flex h-[25px] w-[135px] shrink-0 items-center justify-between rounded-[2px] border border-[#d0d8e0] bg-white px-[3px] text-[14px] text-black">
        <span>r</span>
        <svg viewBox="0 0 10 6" className="mr-[5px] h-[6px] w-[10px]"><path d="M0 0h10L5 6z" fill="#000" /></svg>
      </div>
      <div className="mr-[4.5px] flex w-[20px] shrink-0 justify-center">
        <svg viewBox="0 0 6 10" className="h-[10px] w-[6px]"><path d="M0 0l6 5-6 5z" fill="#000" /></svg>
      </div>
      <Btn><Ico>{zoomChart}</Ico></Btn>
      <Grip className="ml-[31px] mr-[1.5px]" />
      {group4.map((g, i) => <Btn key={i}><Ico>{g}</Ico></Btn>)}
      <Sep className="w-[8px]" />
      {group5.map((g, i) => <Btn key={i}><Ico>{g}</Ico></Btn>)}
      <Sep className="w-[8px]" />
      {group6.map((g, i) => <Btn key={i}><Ico>{g}</Ico></Btn>)}
      <Sep className="w-[8px]" />
      {group7.map((g, i) => <Btn key={i}><Ico>{g}</Ico></Btn>)}
      <Sep className="w-[8px]" />
      {group8.map((g, i) => <Btn key={i}><Ico>{g}</Ico></Btn>)}
      <Sep className="w-[10px]" />
      {group9.map((g, i) => <Btn key={i}><Ico>{g}</Ico></Btn>)}
      <Sep className="w-[6px]" />
      <div className="flex h-[24px] w-[23px] shrink-0 items-center justify-center border border-[#c8c8c8] bg-[#f8f8f8]">
        <svg viewBox="0 0 14 20" className="h-[18px] w-[13px]"><path d="M2 1v15l4-3 2.5 6 2.5-1-2.5-6h5z" fill="#fff" stroke="#000" /></svg>
      </div>
      <Btn><Ico>{tChart}</Ico></Btn>
      <Sep className="w-[8px]" />
      <Btn><Ico>{tools}</Ico></Btn>
      <Sep className="w-[8px]" />
      <Btn><Ico>{addSheet}</Ico></Btn>
      <Sep className="w-[8px]" />
      <Btn><Ico>{noteGrey}</Ico></Btn>
      <Grip className="ml-[13px] mr-[4px]" />
      {drawTools.map((g, i) => <Btn key={i}><Ico>{g}</Ico></Btn>)}
      <Sep className="w-[8px]" />
      {shapes.map((g, i) => <Btn key={i}><Ico>{g}</Ico></Btn>)}
      <span className="font-['Liberation_Sans',sans-serif] text-[12px] tracking-[-0.5px] text-black">abc</span>
    </div>
  );
}

const tabs: [string, string][] = [
  ["STOX_TF60", "w-[89px]"],
  ["STOX_TF120", "w-[96px]"],
  ["STOX TF240", "w-[90px]"],
  ["STOX _100", "w-[85px]"],
  ["STOX_TF30", "w-[87px]"],
  ["FIB_TF60", "w-[77px]"],
  ["FIB_TF120", "w-[79px]"],
  ["FIB TF240", "w-[79px]"],
  ["FIB_100", "w-[68px]"],
  ["FIB_TF30", "w-[76px]"],
  ["BUND vs STOXX", "w-[111px]"],
  ["FIB Frame bassi", "w-[114px]"],
  ["FIB Giornaliero", "w-[108px]"],
  ["STOXX frame bassi", "w-[124px]"],
  ["STOXX giornaliero", "w-[124px]"],
  ["ANNUALE Indici", "w-[109px]"],
  ["No PREZZI", "w-[85px]"],
];

function TabStrip() {
  return (
    <div className="flex h-[18px] shrink-0 items-stretch border-t border-black bg-[#f0f0f0] pl-[3px] font-['Liberation_Sans',sans-serif] text-[12px] tracking-[-0.2px] text-[#222]">
      {["M6 2v8M2 6l3-3v6z", "M2 6l4-3v6z", "M6 6l-4-3v6z", "M1 2v8M6 6l-4-3v6z"].map((d, i) => (
        <div key={i} className="flex w-[16.5px] shrink-0 items-center justify-center border-r border-[#bdbdbd]">
          <svg viewBox="0 0 8 12" className="h-[11px] w-[7px]"><path d={d} fill="#888" stroke="#888" strokeWidth="0.5" /></svg>
        </div>
      ))}
      {tabs.map(([t, w]) => {
        const active = t === "FIB Giornaliero";
        return (
          <div key={t} className={`relative flex shrink-0 items-center justify-center pl-[3px] whitespace-nowrap ${w} ${active ? "bg-white font-bold text-black" : "bg-[#f4f4f4]"}`}>
            <svg viewBox="0 0 8 18" className="absolute top-0 left-0 h-[17px] w-[8px]"><path d="M1 0l5 17" stroke="#000" /></svg>
            {t}
          </div>
        );
      })}
      <svg viewBox="0 0 8 18" className="h-[17px] w-[8px]"><path d="M6 0L1 17" stroke="#000" /></svg>
    </div>
  );
}

const statusCells: [string, string][] = [
  ["Acct:", "w-[52px]"],
  ["Open Psns:", "w-[92px]"],
  ["DT BP:", "w-[62px]"],
  ["Purch Pwr:", "w-[87px]"],
  ["Closed P/L:", "w-[93px]"],
  ["RT TE:", "w-[60px]"],
  ["Open P/L:", "w-[84px]"],
  ["ORDER BAR", "w-[88px] text-[#0a7f0a]"],
  ["MACROS", "w-[66px] text-[#0a7f0a]"],
];

function StatusBar() {
  return (
    <div className="flex h-[22px] shrink-0 items-center border-t border-[#9a9a9a] bg-[#f0eeeb] pt-[1px] font-['Liberation_Sans',sans-serif] text-[14px] text-[#222]">
      <div className="flex-1 pl-[2px]">For Help, press F1</div>
      {statusCells.map(([t, c]) => (
        <div key={t} className={`shrink-0 whitespace-nowrap ${c}`}>{t}</div>
      ))}
      <div className="flex w-[22px] shrink-0 justify-center">
        <div className="mb-[5px] size-[10px] rounded-full bg-[radial-gradient(circle_at_35%_30%,#ffb0b0,#e00000_55%,#700000)]" />
      </div>
      <div className="w-[118px] shrink-0 whitespace-nowrap">16/12/2021 14:08</div>
    </div>
  );
}

function Mdi({ kind, className }: { kind: "min" | "max" | "close"; className: string }) {
  return (
    <div className={`flex items-center justify-center border border-[#c6d2e0] bg-[linear-gradient(#f4f7fb,#dde4ee)] ${className}`}>
      <svg viewBox="0 0 10 10" className="size-[10px]">
        {kind === "min" && <path d="M2 8h5" stroke="#555" strokeWidth="2" />}
        {kind === "max" && <path d="M3.5 1.5h5v4h-2M1.5 4.5h5v4.5h-5z" fill="none" stroke="#555" />}
        {kind === "close" && <path d="M2 2l6 6M8 2l-6 6" stroke="#555" strokeWidth="1.4" />}
      </svg>
    </div>
  );
}

export default function App() {
  return (
    <div className="flex h-[1080px] w-[1920px] flex-col overflow-hidden bg-[#f0f0f0] font-['Noto_Sans',sans-serif]">
      {/* title bar */}
      <div className="relative flex h-[28px] shrink-0 items-center overflow-hidden border-b border-[#4a4a4a] bg-[linear-gradient(90deg,#5f6f80_0,#8f959b_40px,#a4a8ac_300px,#aeb6c0_560px,#b4ccdc_760px,#bcd8ec_1100px,#c4e0f6_1490px,#15375a_1502px,#0f2c4a_1920px)]">
        <div className="absolute inset-y-0 left-0 w-[700px] bg-[linear-gradient(#00000022,#ffffff33)]" />
        <div className="absolute bottom-0 left-[740px] h-[7px] w-[560px] bg-[linear-gradient(90deg,#58686e00,#58686e_200px,#5a6a74_420px,#7f95a500)]" />
        <svg viewBox="0 0 16 22" className="relative ml-[3px] h-[22px] w-[16px] shrink-0">
          <path d="M8 0C3 2 0 7 0 13c0 4 2 8 6 9V8L3 9l5-7 5 7-3-1v14c4-1 6-5 6-9 0-6-3-11-8-13z" fill="#2a78d8" />
        </svg>
        <span className="relative ml-[7px] whitespace-pre text-[14.1px] text-[#101010]">TradeStation 8.1 - STOX_FIB - FIB Giornaliero - [Chart Analysis - GS:FTSEMIB  2 min  [MCEDB] SPMIB FUTURES]</span>
        <div className="absolute top-0 right-[3px] flex h-[25px] w-[137px] overflow-hidden rounded-b-[4px] border border-t-0 border-[#8da0b4]">
          <div className="flex w-[37px] items-end justify-center border-r border-[#8da0b4] bg-[linear-gradient(#3a566e,#24405a)] pb-[6px]"><div className="h-[5px] w-[16px] bg-white" /></div>
          <div className="flex w-[36px] items-center justify-center border-r border-[#8da0b4] bg-[linear-gradient(#3a566e,#24405a)]">
            <svg viewBox="0 0 16 16" className="size-[17px]"><path d="M5 1h10v10h-2V3H5zM1 5h10v10H1zM4 8v4h4V8z" fill="#eee" fillRule="evenodd" /></svg>
          </div>
          <div className="flex flex-1 items-center justify-center bg-[linear-gradient(#d07a60,#b03818)]">
            <svg viewBox="0 0 18 16" className="h-[17px] w-[19px]"><path d="M2 1l7 7 7-7M2 15l7-7 7 7" fill="none" stroke="#fff" strokeWidth="3.4" /></svg>
          </div>
        </div>
      </div>

      {/* menu bar */}
      <div className="flex h-[30px] shrink-0 items-stretch border-b border-[#b8b8b8] bg-[linear-gradient(#ffffff_0,#ffffff_8px,#e6eaf4_11px,#e8ecf5_100%)] text-[14.5px] text-[#111]">
        <svg viewBox="0 0 18 18" className="mt-[6px] ml-[7px] h-[18px] w-[18px] shrink-0">
          <rect width="18" height="18" fill="#10101c" />
          <path d="M1 13l3-4 2 2 3-6 3 4 4-5" fill="none" stroke="#20d020" />
          <path d="M1 16h16" stroke="#d03030" />
        </svg>
        <div className="flex flex-1 items-center pt-[1px]">
          <span className="ml-[9px] w-[37px]">File</span>
          <span className="w-[40px]">Edit</span>
          <span className="w-[46px]">View</span>
          <span className="w-[50px]">Insert</span>
          <span className="w-[61px]">Format</span>
          <span className="w-[70px]">Drawing</span>
          <span className="w-[70px]">Window</span>
          <span>Help</span>
        </div>
        <div className="flex shrink-0 gap-[2px] pr-[1px]">
          <Mdi kind="min" className="w-[22px]" />
          <Mdi kind="max" className="w-[22px]" />
          <Mdi kind="close" className="w-[22px]" />
        </div>
      </div>

      <Toolbar />

      {/* chart window */}
      <div className="relative flex h-[930px] shrink-0 overflow-hidden border-l-2 border-[#a8a8a8] bg-[#020208]">
        <PlotArea />
        <PriceScale />
        <Legend items={row1} className="top-[2px] font-['Liberation_Sans',sans-serif]" />
        <Legend items={row2} className="top-[470px] font-['Liberation_Sans',sans-serif]" />
        <Legend items={row3} className="top-[686px] font-['Liberation_Sans',sans-serif]" />
        <div className="absolute top-[9px] right-0 flex h-[26px] w-[63px] gap-[1px]">
          <Mdi kind="min" className="w-[21px]" />
          <Mdi kind="max" className="w-[21px]" />
          <Mdi kind="close" className="w-[21px]" />
        </div>
      </div>

      {/* horizontal scroll */}
      <div className="flex h-[22px] shrink-0 items-center justify-between bg-[#f0f0f0] pr-[12px] pl-[8px]">
        <svg viewBox="0 0 6 10" className="h-[10px] w-[6px]"><path d="M6 0L0 5l6 5z" fill="#444" /></svg>
        <div className="flex items-center gap-[6px]">
          <div className="flex h-[19px] w-[18px] items-center justify-center gap-[1.5px] rounded-[2px] border border-[#9fb0c0] bg-[linear-gradient(90deg,#f4f4f4,#d0d0d0)]">
            <i className="h-[9px] w-px bg-[#555]" />
            <i className="h-[9px] w-px bg-[#555]" />
            <i className="h-[9px] w-px bg-[#555]" />
          </div>
          <svg viewBox="0 0 6 10" className="h-[10px] w-[6px]"><path d="M0 0l6 5-6 5z" fill="#444" /></svg>
        </div>
      </div>

      <TabStrip />
      <StatusBar />
    </div>
  );
}
